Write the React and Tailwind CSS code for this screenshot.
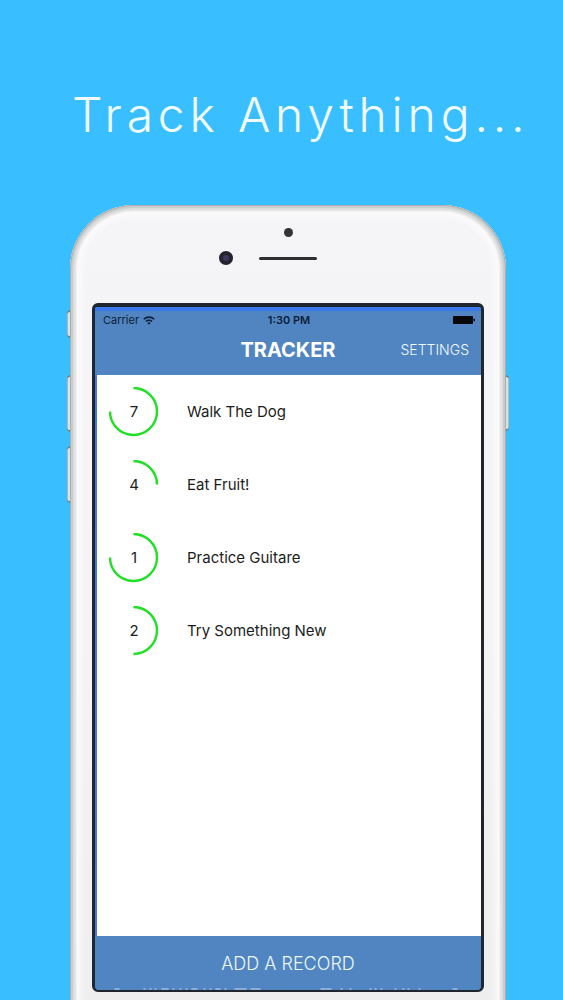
const RECORDS = [
  { count: 7, name: "Walk The Dog", progress: 0.75 },
  { count: 4, name: "Eat Fruit!", progress: 0.25 },
  { count: 1, name: "Practice Guitare", progress: 0.75 },
  { count: 2, name: "Try Something New", progress: 0.5 },
];

function ProgressRing({ count, progress }) {
  return (
    <div className="relative size-[50px] shrink-0">
      <svg viewBox="0 0 50 50" className="size-full -rotate-90" aria-hidden="true">
        <circle
          cx="25.5"
          cy="24.5"
          r="23.5"
          fill="none"
          stroke="#1fe025"
          strokeWidth="2.4"
          pathLength="1"
          strokeDasharray={`${progress} 2`}
        />
      </svg>
      <span className="absolute inset-0 flex items-center justify-center pt-0.5 text-[15px] text-[#1c1c1c]">
        {count}
      </span>
    </div>
  );
}

function StatusBar() {
  return (
    <div className="grid h-[18px] grid-cols-3 items-center pl-2 pr-1.5 text-[11px] text-[#0c2038]">
      <div className="flex items-center gap-1">
        <span>Carrier</span>
        <svg viewBox="0 0 24 18" className="h-[9px] w-3" fill="none" stroke="currentColor" strokeWidth="3.4" aria-hidden="true">
          <path d="M1.5 6.5a15 15 0 0 1 21 0" />
          <path d="M6 11a8.6 8.6 0 0 1 12 0" />
          <path d="M12 17.5 8.6 14a5 5 0 0 1 6.8 0z" fill="currentColor" stroke="none" />
        </svg>
      </div>
      <span className="text-center font-semibold">1:30 PM</span>
      <svg viewBox="0 0 22 8" className="h-2 w-[22px] justify-self-end" fill="#05070a" aria-hidden="true">
        <rect width="20" height="8" rx="0.8" />
        <rect x="20.6" y="2.6" width="1.4" height="2.8" rx="0.7" />
      </svg>
    </div>
  );
}

function ClippedRow() {
  return (
    <svg viewBox="0 0 385 2" className="block h-0.5 w-full" fill="none" stroke="#c3d6ea" strokeWidth="1.2" aria-hidden="true">
      <path d="M19 1h5M48 1h2M54 1h2M59 1h2M66 1h7M77 1h2M84 1h2M90 1h2M96 1h6M108 1h2M114 1h2M120 1h5M129 1h2M139 1h12M155 1h10M225 1h11M245 1h2M254 1h2M274 1h2M279 1h2M285 1h2M299 1h2M307 1h2M312 1h2M323 1h2M357 1h5" />
    </svg>
  );
}

function SideButton({ className }) {
  return (
    <span
      aria-hidden="true"
      className={`absolute w-1 border-y-2 border-[#777c80] bg-linear-to-r from-[#96a5ae] via-[#f2f4f5] to-[#a3a7a9] ${className}`}
    />
  );
}

function Phone({ children }) {
  return (
    <div className="relative flex flex-1 flex-col">
      <SideButton className="-left-[3px] top-[105px] h-7 rounded-l-sm" />
      <SideButton className="-left-[3px] top-[170px] h-[57px] rounded-l-sm" />
      <SideButton className="-left-[3px] top-[241px] h-[57px] rounded-l-sm" />
      <SideButton className="-right-[3px] top-[170px] h-[56px] rounded-r-sm" />
      <div className="relative -mb-8 flex flex-1 flex-col rounded-t-[64px] bg-linear-to-b from-[#f5f4f7] via-[#f4f3f5] to-[#eeeeee] px-[22px] pb-10 shadow-[inset_0_0_0_1px_#a9afb0,inset_0_0_1px_3px_#c9cccb,inset_0_0_2px_6px_#dedfdf,inset_0_0_7px_10px_#fdfdfe]">
        <div className="flex h-[98px] flex-col items-center pt-[23px]" aria-hidden="true">
          <span className="size-[9px] rounded-full bg-[#343336]" />
          <div className="mt-3.5 grid w-full grid-cols-[1fr_58px_1fr] items-center">
            <span className="mr-[26px] flex size-3.5 items-center justify-center justify-self-end rounded-full bg-[#24222d]">
              <span className="size-1.5 rounded-full bg-[#3b3a5e]" />
            </span>
            <span className="h-[3px] rounded-full bg-[#2f2e31]" />
          </div>
        </div>
        {children}
      </div>
    </div>
  );
}

export default function App() {
  return (
    <main className="flex min-h-screen flex-col overflow-hidden bg-[#39bfff] font-['Inter','Liberation_Sans',sans-serif]">
      <h1 className="pl-[72px] pt-[84px] text-5xl leading-[62px] font-light tracking-widest whitespace-nowrap text-[#f0fcff]">
        Track Anything...
      </h1>
      <div className="mt-[59px] flex flex-1 flex-col pl-[70px] pr-[57px]">
        <Phone>
          <section className="flex flex-1 flex-col overflow-hidden rounded-md border-x-[3px] border-t-4 border-b-2 border-[#20262f] bg-[#5085c2]">
            <header className="border-t-4 border-[#3b78ec] pb-1">
              <StatusBar />
              <div className="grid h-[42px] grid-cols-[1fr_auto_1fr] items-center px-3 text-white">
                <h2 className="col-start-2 text-xl font-bold">TRACKER</h2>
                <button type="button" className="justify-self-end text-sm font-light text-[#f2faff]">
                  SETTINGS
                </button>
              </div>
            </header>
            <ul className="flex-1 border-l-2 border-[#4079d6] bg-white">
              {RECORDS.map((record) => (
                <li key={record.name} className="flex h-[73px] items-center gap-7 pl-3">
                  <ProgressRing count={record.count} progress={record.progress} />
                  <span className="pt-0.5 text-[15px] text-[#1c1c1c]">{record.name}</span>
                </li>
              ))}
            </ul>
            <button type="button" className="h-[52px] pt-1 text-lg font-light text-[#edf8ff]">
              ADD A RECORD
            </button>
            <ClippedRow />
          </section>
        </Phone>
      </div>
    </main>
  );
}
